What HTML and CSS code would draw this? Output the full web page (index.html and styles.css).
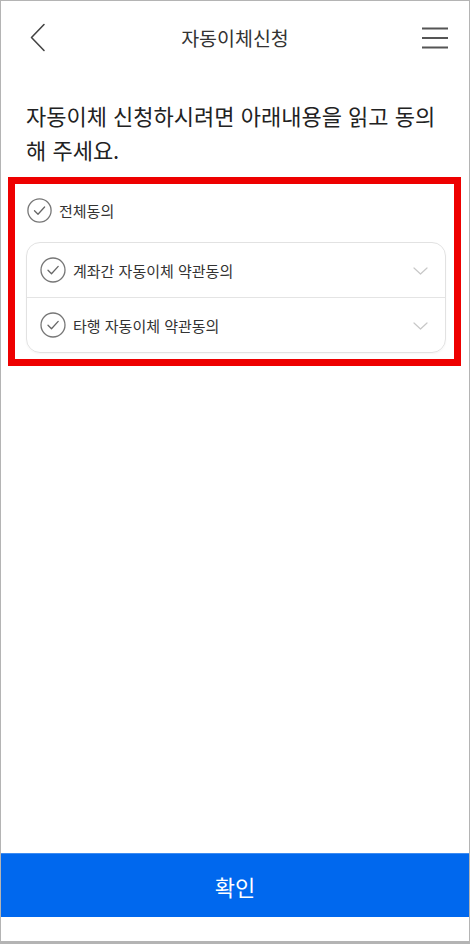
FILE: index.html
```html
<!DOCTYPE html>
<html lang="ko">
<head>
<meta charset="utf-8">
<link rel="stylesheet" href="styles.css">
</head>
<body>
<div class="screen">
  <header class="topbar">
    <div class="bar-left">
      <svg class="icon-back" width="16" height="30" viewBox="0 0 16 30"><path d="M14 1.5 L1.5 14.5 L14 27.5" fill="none" stroke="#444" stroke-width="1.6" stroke-linecap="round" stroke-linejoin="round"/></svg>
    </div>
    <h1 class="title">자동이체신청</h1>
    <div class="bar-right">
      <svg class="icon-menu" width="28" height="24" viewBox="0 0 28 24"><path d="M1 2.5 H27 M1 12 H27 M1 21.5 H27" stroke="#555" stroke-width="1.8"/></svg>
    </div>
  </header>

  <main class="content">
    <p class="lead">자동이체 신청하시려면 아래내용을 읽고 동의해 주세요.</p>

    <section class="agree-box">
      <div class="agree-all">
        <span class="check"><svg width="25" height="25" viewBox="0 0 25 25"><circle cx="12.5" cy="12.5" r="11.6" fill="none" stroke="#777" stroke-width="1.3"/><path d="M7.5 12.8 L11 16.2 L17.6 9" fill="none" stroke="#666" stroke-width="1.3" stroke-linecap="round" stroke-linejoin="round"/></svg></span>
        <span class="agree-all-label">전체동의</span>
      </div>
      <div class="card">
        <div class="row">
          <span class="check"><svg width="26" height="26" viewBox="0 0 26 26"><circle cx="13" cy="13" r="12" fill="none" stroke="#777" stroke-width="1.3"/><path d="M8 13.3 L11.5 16.8 L18.2 9.4" fill="none" stroke="#666" stroke-width="1.3" stroke-linecap="round" stroke-linejoin="round"/></svg></span>
          <span class="row-label">계좌간 자동이체 약관동의</span>
          <svg class="chev" width="15" height="8" viewBox="0 0 15 8"><path d="M1 1 L7.5 7 L14 1" fill="none" stroke="#c8c8c8" stroke-width="1.2" stroke-linecap="round" stroke-linejoin="round"/></svg>
        </div>
        <div class="row">
          <span class="check"><svg width="26" height="26" viewBox="0 0 26 26"><circle cx="13" cy="13" r="12" fill="none" stroke="#777" stroke-width="1.3"/><path d="M8 13.3 L11.5 16.8 L18.2 9.4" fill="none" stroke="#666" stroke-width="1.3" stroke-linecap="round" stroke-linejoin="round"/></svg></span>
          <span class="row-label">타행 자동이체 약관동의</span>
          <svg class="chev" width="15" height="8" viewBox="0 0 15 8"><path d="M1 1 L7.5 7 L14 1" fill="none" stroke="#c8c8c8" stroke-width="1.2" stroke-linecap="round" stroke-linejoin="round"/></svg>
        </div>
      </div>
    </section>
  </main>

  <button class="confirm" type="button">확인</button>
  <div class="bottom-space"></div>
</div>
</body>
</html>
```

FILE: styles.css
```css
html, body {
  margin: 0;
  padding: 0;
  background: #fff;
}
body {
  font-family: "Noto Sans CJK KR", "Noto Sans", sans-serif;
  color: #222;
}
.screen {
  box-sizing: border-box;
  width: 470px;
  height: 944px;
  border: 1px solid #b4b4b4;
  border-bottom-width: 3px;
  display: flex;
  flex-direction: column;
  background: #fff;
}
.topbar {
  height: 73px;
  display: grid;
  grid-template-columns: 1fr auto 1fr;
  align-items: center;
}
.bar-left {
  padding-left: 29px;
  display: flex;
  align-items: center;
}
.bar-right {
  display: flex;
  justify-content: flex-end;
  padding-right: 20px;
}
.icon-back { display: block; }
.icon-menu { display: block; }
.title {
  margin: 0;
  font-size: 19.5px;
  font-weight: 400;
  color: #333;
  line-height: 26px;
}
.content {
  flex: 1;
}
.lead {
  margin: 24px 0 0;
  padding: 0 20px 0 25px;
  font-size: 22px;
  line-height: 34px;
  color: #222;
  word-break: break-all;
}
.agree-box {
  margin: 11px 8px 0 7px;
  border: 7px solid #ee0000;
  padding: 13px 8px 6px 11px;
  background: #fff;
}
.agree-all {
  display: flex;
  align-items: center;
  padding-left: 1px;
  height: 26px;
}
.check {
  display: flex;
  flex: none;
}
.check svg { display: block; }
.agree-all-label {
  margin-left: 7px;
  font-size: 15px;
  color: #333;
}
.card {
  margin-top: 19px;
  border: 1px solid #e2e2e2;
  border-radius: 14px;
  box-shadow: 0 1px 2px rgba(0,0,0,0.04);
}
.row {
  height: 54px;
  display: flex;
  align-items: center;
  padding: 0 17px 0 13px;
}
.row + .row {
  border-top: 1px solid #e4e4e4;
}
.row-label {
  margin-left: 7px;
  flex: 1;
  font-size: 15px;
  color: #333;
}
.chev { display: block; margin-top: 1px; }
.confirm {
  display: block;
  width: 100%;
  height: 64px;
  border: 0;
  border-top: 1px solid #3d8cf2;
  margin: 0;
  padding: 0;
  background: #0068ee;
  color: #fff;
  font-family: "Noto Sans CJK KR", "Noto Sans", sans-serif;
  font-size: 22px;
  font-weight: 400;
}
.bottom-space {
  height: 24px;
}
```
